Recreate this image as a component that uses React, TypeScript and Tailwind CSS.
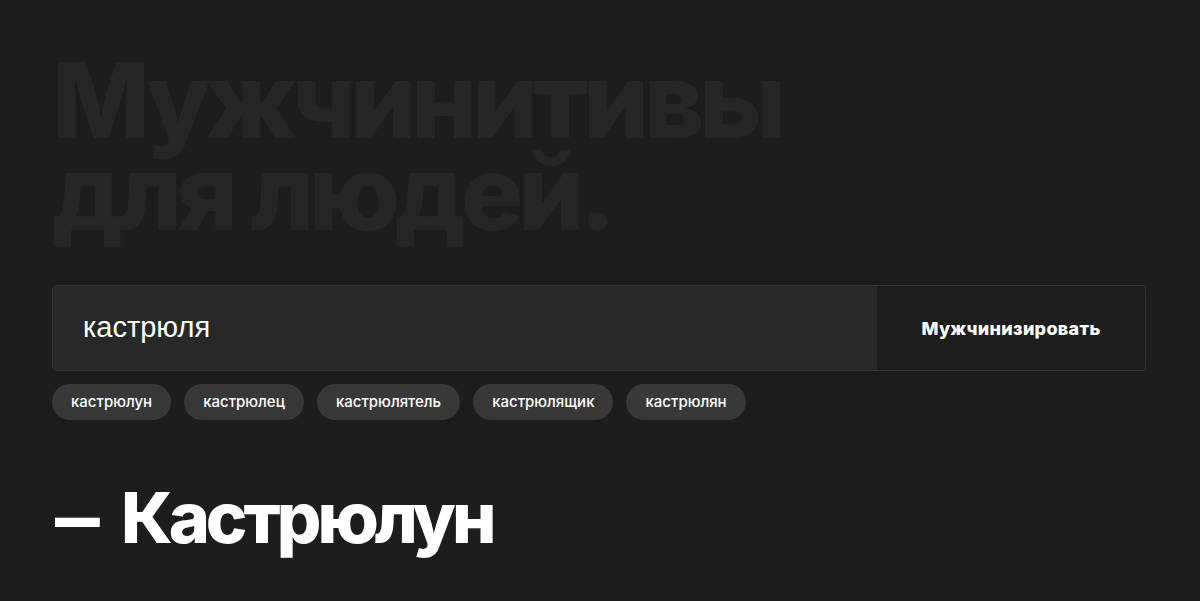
import React from "react";

const chips = ["кастрюлун", "кастрюлец", "кастрюлятель", "кастрюлящик", "кастрюлян"];

export default function App() {
  return (
    <div className="min-h-[601px] w-full bg-[#1d1d1d] px-[52px] pt-[54px]" style={{ fontFamily: "Inter, 'Noto Sans', sans-serif" }}>
      <h1 className="text-[104px] font-extrabold leading-[92px] tracking-[-5.2px] text-[#262626]">
        Мужчинитивы
        <br />
        для людей.
      </h1>
      <div className="mt-[47px] flex h-[86px] w-[1094px] overflow-hidden rounded-[4px] border border-[#333333]">
        <div className="flex flex-1 items-center bg-[#282828] pl-[30px] text-[29px] text-white" style={{ fontFamily: "'Liberation Sans', Arial, sans-serif" }}>
          кастрюля
        </div>
        <div className="flex w-[268px] items-center justify-center bg-[#1e1e1e] text-[18px] font-extrabold tracking-[0.3px] text-white">
          Мужчинизировать
        </div>
      </div>
      <div className="mt-[13px] flex gap-[13px]">
        {chips.map((c) => (
          <div key={c} className="flex h-[36px] items-center rounded-full bg-[#383838] px-[19px] text-[15px] font-medium text-white">
            {c}
          </div>
        ))}
      </div>
      <div className="mt-[58px] flex items-baseline pl-[3px] text-[70px] font-extrabold leading-[80px] tracking-[-4px] text-white">
        <span className="-mr-[26px] inline-block origin-left scale-x-[0.64]">—</span>
        <span className="ml-[26px]">Кастрюлун</span>
      </div>
    </div>
  );
}
